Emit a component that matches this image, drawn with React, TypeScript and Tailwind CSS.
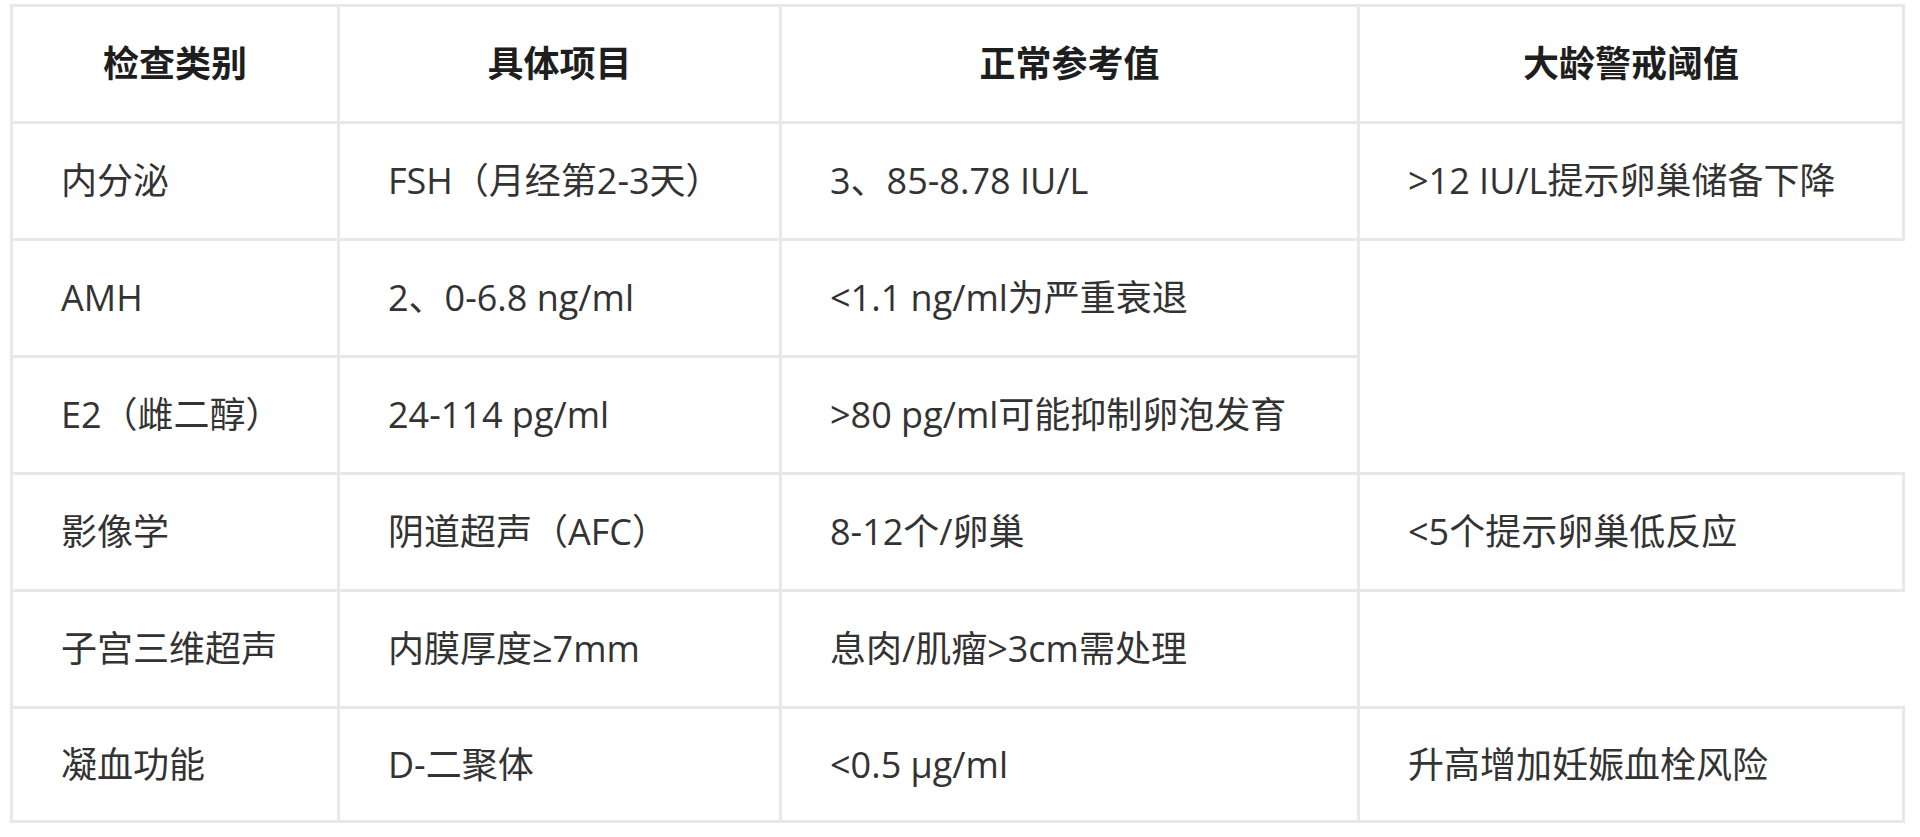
import React from 'react';

type Row = {
  category: string;
  item: string;
  normal: string;
  alert?: { text: string; span?: number; closed: boolean } | null;
};

const rows: Row[] = [
  { category: '内分泌', item: 'FSH（月经第2-3天）', normal: '3、85-8.78 IU/L', alert: { text: '>12 IU/L提示卵巢储备下降', closed: true } },
  { category: 'AMH', item: '2、0-6.8 ng/ml', normal: '<1.1 ng/ml为严重衰退', alert: { text: '', span: 2, closed: false } },
  { category: 'E2（雌二醇）', item: '24-114 pg/ml', normal: '>80 pg/ml可能抑制卵泡发育', alert: null },
  { category: '影像学', item: '阴道超声（AFC）', normal: '8-12个/卵巢', alert: { text: '<5个提示卵巢低反应', closed: true } },
  { category: '子宫三维超声', item: '内膜厚度≥7mm', normal: '息肉/肌瘤>3cm需处理', alert: { text: '', closed: false } },
  { category: '凝血功能', item: 'D-二聚体', normal: '<0.5 μg/ml', alert: { text: '升高增加妊娠血栓风险', closed: true } },
];

const headers = ['检查类别', '具体项目', '正常参考值', '大龄警戒阈值'];

const App: React.FC = () => {
  return (
    <div
      className="w-[1920px] h-[837px] bg-white overflow-hidden pt-[4px] pl-[10px]"
      style={{ fontFamily: '"Open Sans", "Noto Sans CJK SC", sans-serif' }}
    >
      <div className="grid grid-cols-[327px_442px_578px_548px] auto-rows-[117px] text-[36px] text-[#333333]">
        {/* Header */}
        {headers.map((h, i) => (
          <div
            key={h}
            className={`flex items-center justify-center border-l-[3px] border-t-[3px] border-[#e8e8e8] font-bold text-[#1e1e1e] ${
              i === 3 ? 'border-r-[3px]' : ''
            }`}
          >
            {h}
          </div>
        ))}

        {/* Body */}
        {rows.map((r, idx) => {
          const last = idx === rows.length - 1;
          const base = `flex items-center pl-[48px] border-l-[3px] border-t-[3px] border-[#e8e8e8] whitespace-nowrap ${
            last ? 'border-b-[3px]' : ''
          }`;
          return (
            <React.Fragment key={r.category}>
              <div className={base}>{r.category}</div>
              <div className={base}>{r.item}</div>
              <div className={base}>{r.normal}</div>
              {r.alert && (
                <div
                  className={`${base} ${r.alert.closed ? 'border-r-[3px]' : ''} ${
                    r.alert.span === 2 ? 'row-span-2' : ''
                  }`}
                >
                  {r.alert.text}
                </div>
              )}
            </React.Fragment>
          );
        })}
      </div>
    </div>
  );
};

export default App;
